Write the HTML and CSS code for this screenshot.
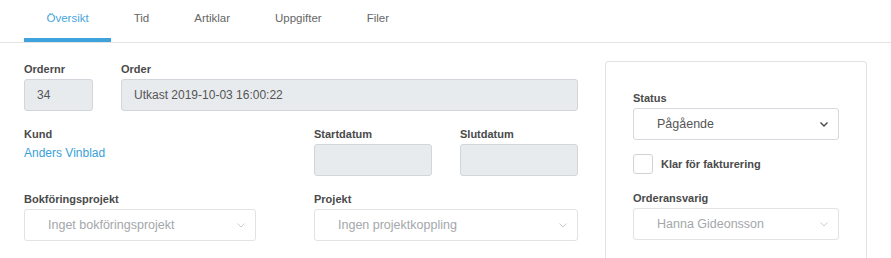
FILE: index.html
```html
<!DOCTYPE html>
<html>
<head>
    <meta charset="utf-8">
    <title>Order</title>
    <link rel="stylesheet" href="styles.css">
</head>
<body>
    <div class="tabs">
        <a class="tab active">Översikt</a>
        <a class="tab">Tid</a>
        <a class="tab">Artiklar</a>
        <a class="tab">Uppgifter</a>
        <a class="tab">Filer</a>
    </div>

    <div class="content">
        <div class="main">
            <div class="row row-order">
                <div class="field">
                    <label>Ordernr</label>
                    <div class="input disabled">34</div>
                </div>
                <div class="field">
                    <label>Order</label>
                    <div class="input disabled">Utkast 2019-10-03 16:00:22</div>
                </div>
            </div>

            <div class="row row-dates">
                <div class="field">
                    <label>Kund</label>
                    <a class="link">Anders Vinblad</a>
                </div>
                <div class="field">
                    <label>Startdatum</label>
                    <div class="input disabled"></div>
                </div>
                <div class="field">
                    <label>Slutdatum</label>
                    <div class="input disabled"></div>
                </div>
            </div>

            <div class="row row-projects">
                <div class="field">
                    <label>Bokföringsprojekt</label>
                    <div class="select muted">
                        <span>Inget bokföringsprojekt</span>
                        <svg class="chevron" width="8" height="5" viewBox="0 0 8 5"><polyline points="0.5,0.5 4,4 7.5,0.5" fill="none" stroke="currentColor" stroke-width="1"/></svg>
                    </div>
                </div>
                <div class="field">
                    <label>Projekt</label>
                    <div class="select muted">
                        <span>Ingen projektkoppling</span>
                        <svg class="chevron" width="8" height="5" viewBox="0 0 8 5"><polyline points="0.5,0.5 4,4 7.5,0.5" fill="none" stroke="currentColor" stroke-width="1"/></svg>
                    </div>
                </div>
            </div>
        </div>

        <aside class="panel">
            <div class="field">
                <label>Status</label>
                <div class="select">
                    <span>Pågående</span>
                    <svg class="chevron" width="8" height="5" viewBox="0 0 8 5"><polyline points="0.5,0.5 4,4 7.5,0.5" fill="none" stroke="currentColor" stroke-width="1.3"/></svg>
                </div>
            </div>
            <div class="check-row">
                <span class="checkbox"></span>
                <span class="check-label">Klar för fakturering</span>
            </div>
            <div class="field">
                <label>Orderansvarig</label>
                <div class="select muted">
                    <span>Hanna Gideonsson</span>
                    <svg class="chevron" width="8" height="5" viewBox="0 0 8 5"><polyline points="0.5,0.5 4,4 7.5,0.5" fill="none" stroke="currentColor" stroke-width="1"/></svg>
                </div>
            </div>
        </aside>
    </div>
</body>
</html>
```

FILE: styles.css
```css
* {
    margin: 0;
    padding: 0;
    box-sizing: border-box;
}
body {
    font-family: "Liberation Sans", Arial, sans-serif;
    background-color: #fff;
    color: #4a4a4a;
    width: 891px;
}
.tabs {
    display: flex;
    height: 43px;
    padding-left: 24px;
    border-bottom: 1px solid #e4e4e4;
}
.tab {
    display: block;
    height: 42px;
    padding: 0 22.5px;
    font-size: 11.5px;
    line-height: 37px;
    color: #666;
    border-bottom: 4px solid transparent;
    cursor: pointer;
}
.tab.active {
    color: #46a6dd;
    border-bottom-color: #3ea3dc;
}
.content {
    display: flex;
    gap: 27px;
    padding: 18px 24px 0;
}
.main {
    flex: 1;
    padding-top: 1px;
}
.row {
    display: grid;
    column-gap: 28px;
    margin-bottom: 16px;
}
.row-order {
    grid-template-columns: 69px 1fr;
}
.row-dates {
    grid-template-columns: 262px 118px 1fr;
}
.row-projects {
    grid-template-columns: 232px 1fr;
    column-gap: 58px;
    margin-bottom: 0;
}
label {
    display: block;
    font-size: 11px;
    font-weight: bold;
    line-height: 14px;
    margin-bottom: 3px;
    color: #4a4a4a;
}
.input {
    height: 32px;
    padding: 0 12px;
    font-size: 12px;
    line-height: 30px;
    color: #555;
    border: 1px solid #d2d6db;
    border-radius: 3px;
}
.input.disabled {
    background-color: #e8ebee;
}
.link {
    display: block;
    margin-top: 3px;
    font-size: 12px;
    line-height: 18px;
    color: #3a9fda;
    cursor: pointer;
}
.select {
    display: flex;
    align-items: center;
    justify-content: space-between;
    height: 32px;
    padding: 0 10px 0 23px;
    font-size: 12.5px;
    color: #555;
    border: 1px solid #d6d9de;
    border-radius: 3px;
    background-color: #fff;
}
.select.muted {
    color: #a4a7ab;
    border-color: #e1e3e6;
}
.select .chevron {
    color: #444;
}
.select.muted .chevron {
    color: #cacdd0;
}
.panel {
    width: 262px;
    flex-shrink: 0;
    height: 197px;
    padding: 29px 27px 0;
    border: 1px solid #e1e1e1;
    border-bottom: none;
    border-radius: 4px 4px 0 0;
}
.check-row {
    display: flex;
    align-items: center;
    gap: 8px;
    margin: 14px 0 17px;
}
.checkbox {
    width: 20px;
    height: 20px;
    border: 1px solid #cfd2d6;
    border-radius: 3px;
}
.check-label {
    font-size: 11px;
    font-weight: bold;
    color: #4a4a4a;
}
```
